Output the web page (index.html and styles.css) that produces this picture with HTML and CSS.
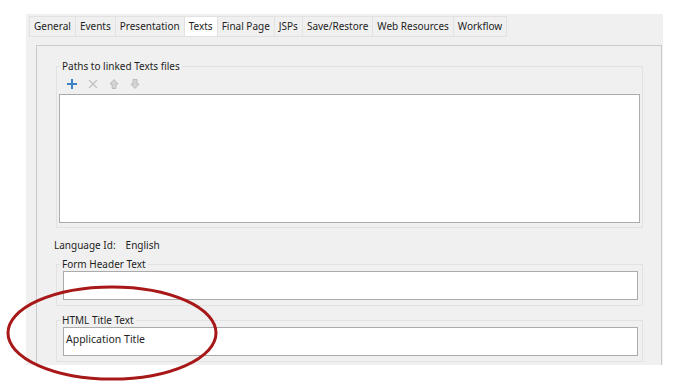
FILE: index.html
```html
<!DOCTYPE html>
<html>
<head>
    <title>Texts</title>
    <link rel="stylesheet" href="styles.css">
</head>
<body>
    <div class="window">
        <div class="tabs">
            <span class="tab">General</span>
            <span class="tab">Events</span>
            <span class="tab">Presentation</span>
            <span class="tab active">Texts</span>
            <span class="tab">Final Page</span>
            <span class="tab">JSPs</span>
            <span class="tab">Save/Restore</span>
            <span class="tab">Web Resources</span>
            <span class="tab">Workflow</span>
        </div>

        <div class="panel">
            <fieldset class="group paths">
                <legend>Paths to linked Texts files</legend>
                <div class="toolbar">
                    <svg class="icon" viewBox="0 0 12 12"><path d="M6 1v10M1 6h10" stroke="#3b82c9" stroke-width="2"/></svg>
                    <svg class="icon" viewBox="0 0 12 12"><path d="M2 2l8 8M10 2l-8 8" stroke="#c2c2c2" stroke-width="1.3"/></svg>
                    <svg class="icon" viewBox="0 0 12 12"><path d="M6 1.5l4 4.5H8v4.5H4V6H2z" fill="#d4d4d4" stroke="#b4b4b4" stroke-width="0.8"/></svg>
                    <svg class="icon" viewBox="0 0 12 12"><path d="M6 10.5l4-4.5H8V1.5H4V6H2z" fill="#d4d4d4" stroke="#b4b4b4" stroke-width="0.8"/></svg>
                </div>
                <div class="list"></div>
            </fieldset>

            <div class="lang">
                <span class="lang-label">Language Id:</span>
                <span>English</span>
            </div>

            <fieldset class="group">
                <legend>Form Header Text</legend>
                <div class="textbox"></div>
            </fieldset>

            <fieldset class="group title">
                <legend>HTML Title Text</legend>
                <div class="textbox">Application Title</div>
            </fieldset>
        </div>
    </div>

    <svg class="mark" width="220" height="100" viewBox="0 0 220 100">
        <ellipse cx="110" cy="49" rx="104" ry="46" fill="none" stroke="#a81818" stroke-width="3"/>
    </svg>
</body>
</html>
```

FILE: styles.css
```css
body { margin: 0; background: #fff; font-family: "Noto Sans", "Open Sans", sans-serif; font-size: 10px; color: #1e1e1e; }

.window { margin: 14px 0 0 26px; width: 637px; height: 351px; background: #f0f0f0; }
.tabs { display: flex; padding: 2px 0 0 3px; height: 21px; }
.tab { padding: 0 4px; line-height: 19px; border: 1px solid #e2e2e2; border-left: none; background: #f0f0f0; }
.tab:first-child { border-left: 1px solid #e2e2e2; }
.tab.active { background: #fff; }

.panel { margin: 8px 1px 0 10px; height: 319px; border: 1px solid #cbcbcb; border-bottom: none; }

.group { margin: 0 18px 0 19px; padding: 0 2px 5px 2px; border: 1px solid #e2e2e2; }
.group legend { padding: 0 2px; margin-left: 1px; line-height: 14px; }
.paths { margin-top: 13px; padding-bottom: 4px; }
.title { margin-top: 7px; }

.toolbar { display: flex; gap: 9px; height: 21px; align-items: center; padding-left: 7px; }
.icon { width: 12px; height: 12px; }

.list { height: 127px; background: #fff; border: 1px solid #ababab; }

.lang { display: flex; gap: 10px; padding: 10px 0 0 17px; height: 29px; box-sizing: border-box; }

.textbox { height: 29px; margin: 0 2px 0 4px; background: #fff; border: 1px solid #ababab; padding: 4px 2px; box-sizing: border-box; font-size: 10.5px; }

.mark { position: absolute; left: 2px; top: 284px; }
```
